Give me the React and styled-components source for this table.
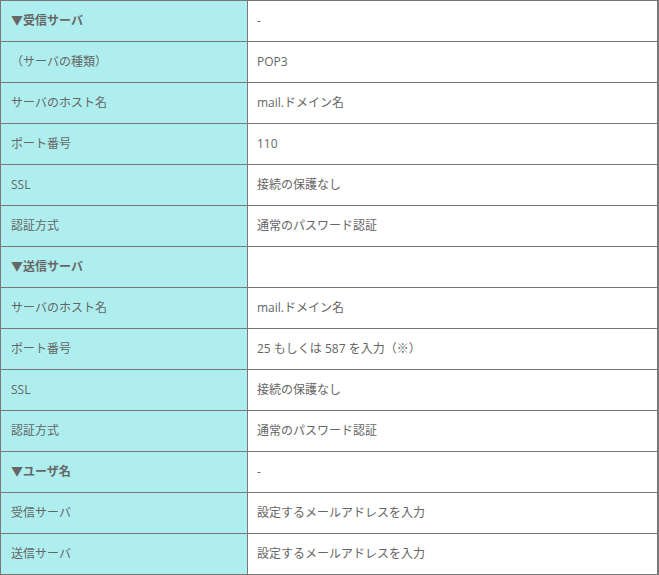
import styled, { createGlobalStyle } from 'styled-components';

const GlobalStyle = createGlobalStyle`
  html, body {
    margin: 0;
    padding: 0;
    background: #fff;
  }
  body {
    font-family: "Open Sans", "Noto Sans CJK JP", sans-serif;
  }
`;

const Table = styled.table`
  width: 659px;
  border-collapse: separate;
  border-spacing: 0;
  border-top: 1px solid #777;
  border-left: 1px solid #777;
  border-right: 2px solid #777;
  font-size: 12px;
  line-height: 16px;
  color: #666;
`;

const Head = styled.th`
  width: 236px;
  height: 39px;
  padding: 0 0 1px 10px;
  box-sizing: content-box;
  text-align: left;
  vertical-align: middle;
  background: #afeeee;
  border-right: 1px solid #777;
  border-bottom: 1px solid #777;
  font-weight: ${(p) => (p.$section ? 700 : 400)};
  white-space: nowrap;
`;

const Cell = styled.td`
  height: 39px;
  padding: 0 0 1px 9px;
  text-align: left;
  vertical-align: middle;
  border-bottom: 1px solid #777;
  white-space: nowrap;
`;

var rows = [
  ['▼受信サーバ', '-', true],
  ['（サーバの種類）', 'POP3'],
  ['サーバのホスト名', 'mail.ドメイン名'],
  ['ポート番号', '110'],
  ['SSL', '接続の保護なし'],
  ['認証方式', '通常のパスワード認証'],
  ['▼送信サーバ', '', true],
  ['サーバのホスト名', 'mail.ドメイン名'],
  ['ポート番号', '25 もしくは 587 を入力（※）'],
  ['SSL', '接続の保護なし'],
  ['認証方式', '通常のパスワード認証'],
  ['▼ユーザ名', '-', true],
  ['受信サーバ', '設定するメールアドレスを入力'],
  ['送信サーバ', '設定するメールアドレスを入力'],
];

export default function App() {
  return (
    <>
      <GlobalStyle />
      <Table>
        <tbody>
          {rows.map(([label, value, section], i) => (
            <tr key={i}>
              <Head $section={section}>{label}</Head>
              <Cell>{value}</Cell>
            </tr>
          ))}
        </tbody>
      </Table>
    </>
  );
}
